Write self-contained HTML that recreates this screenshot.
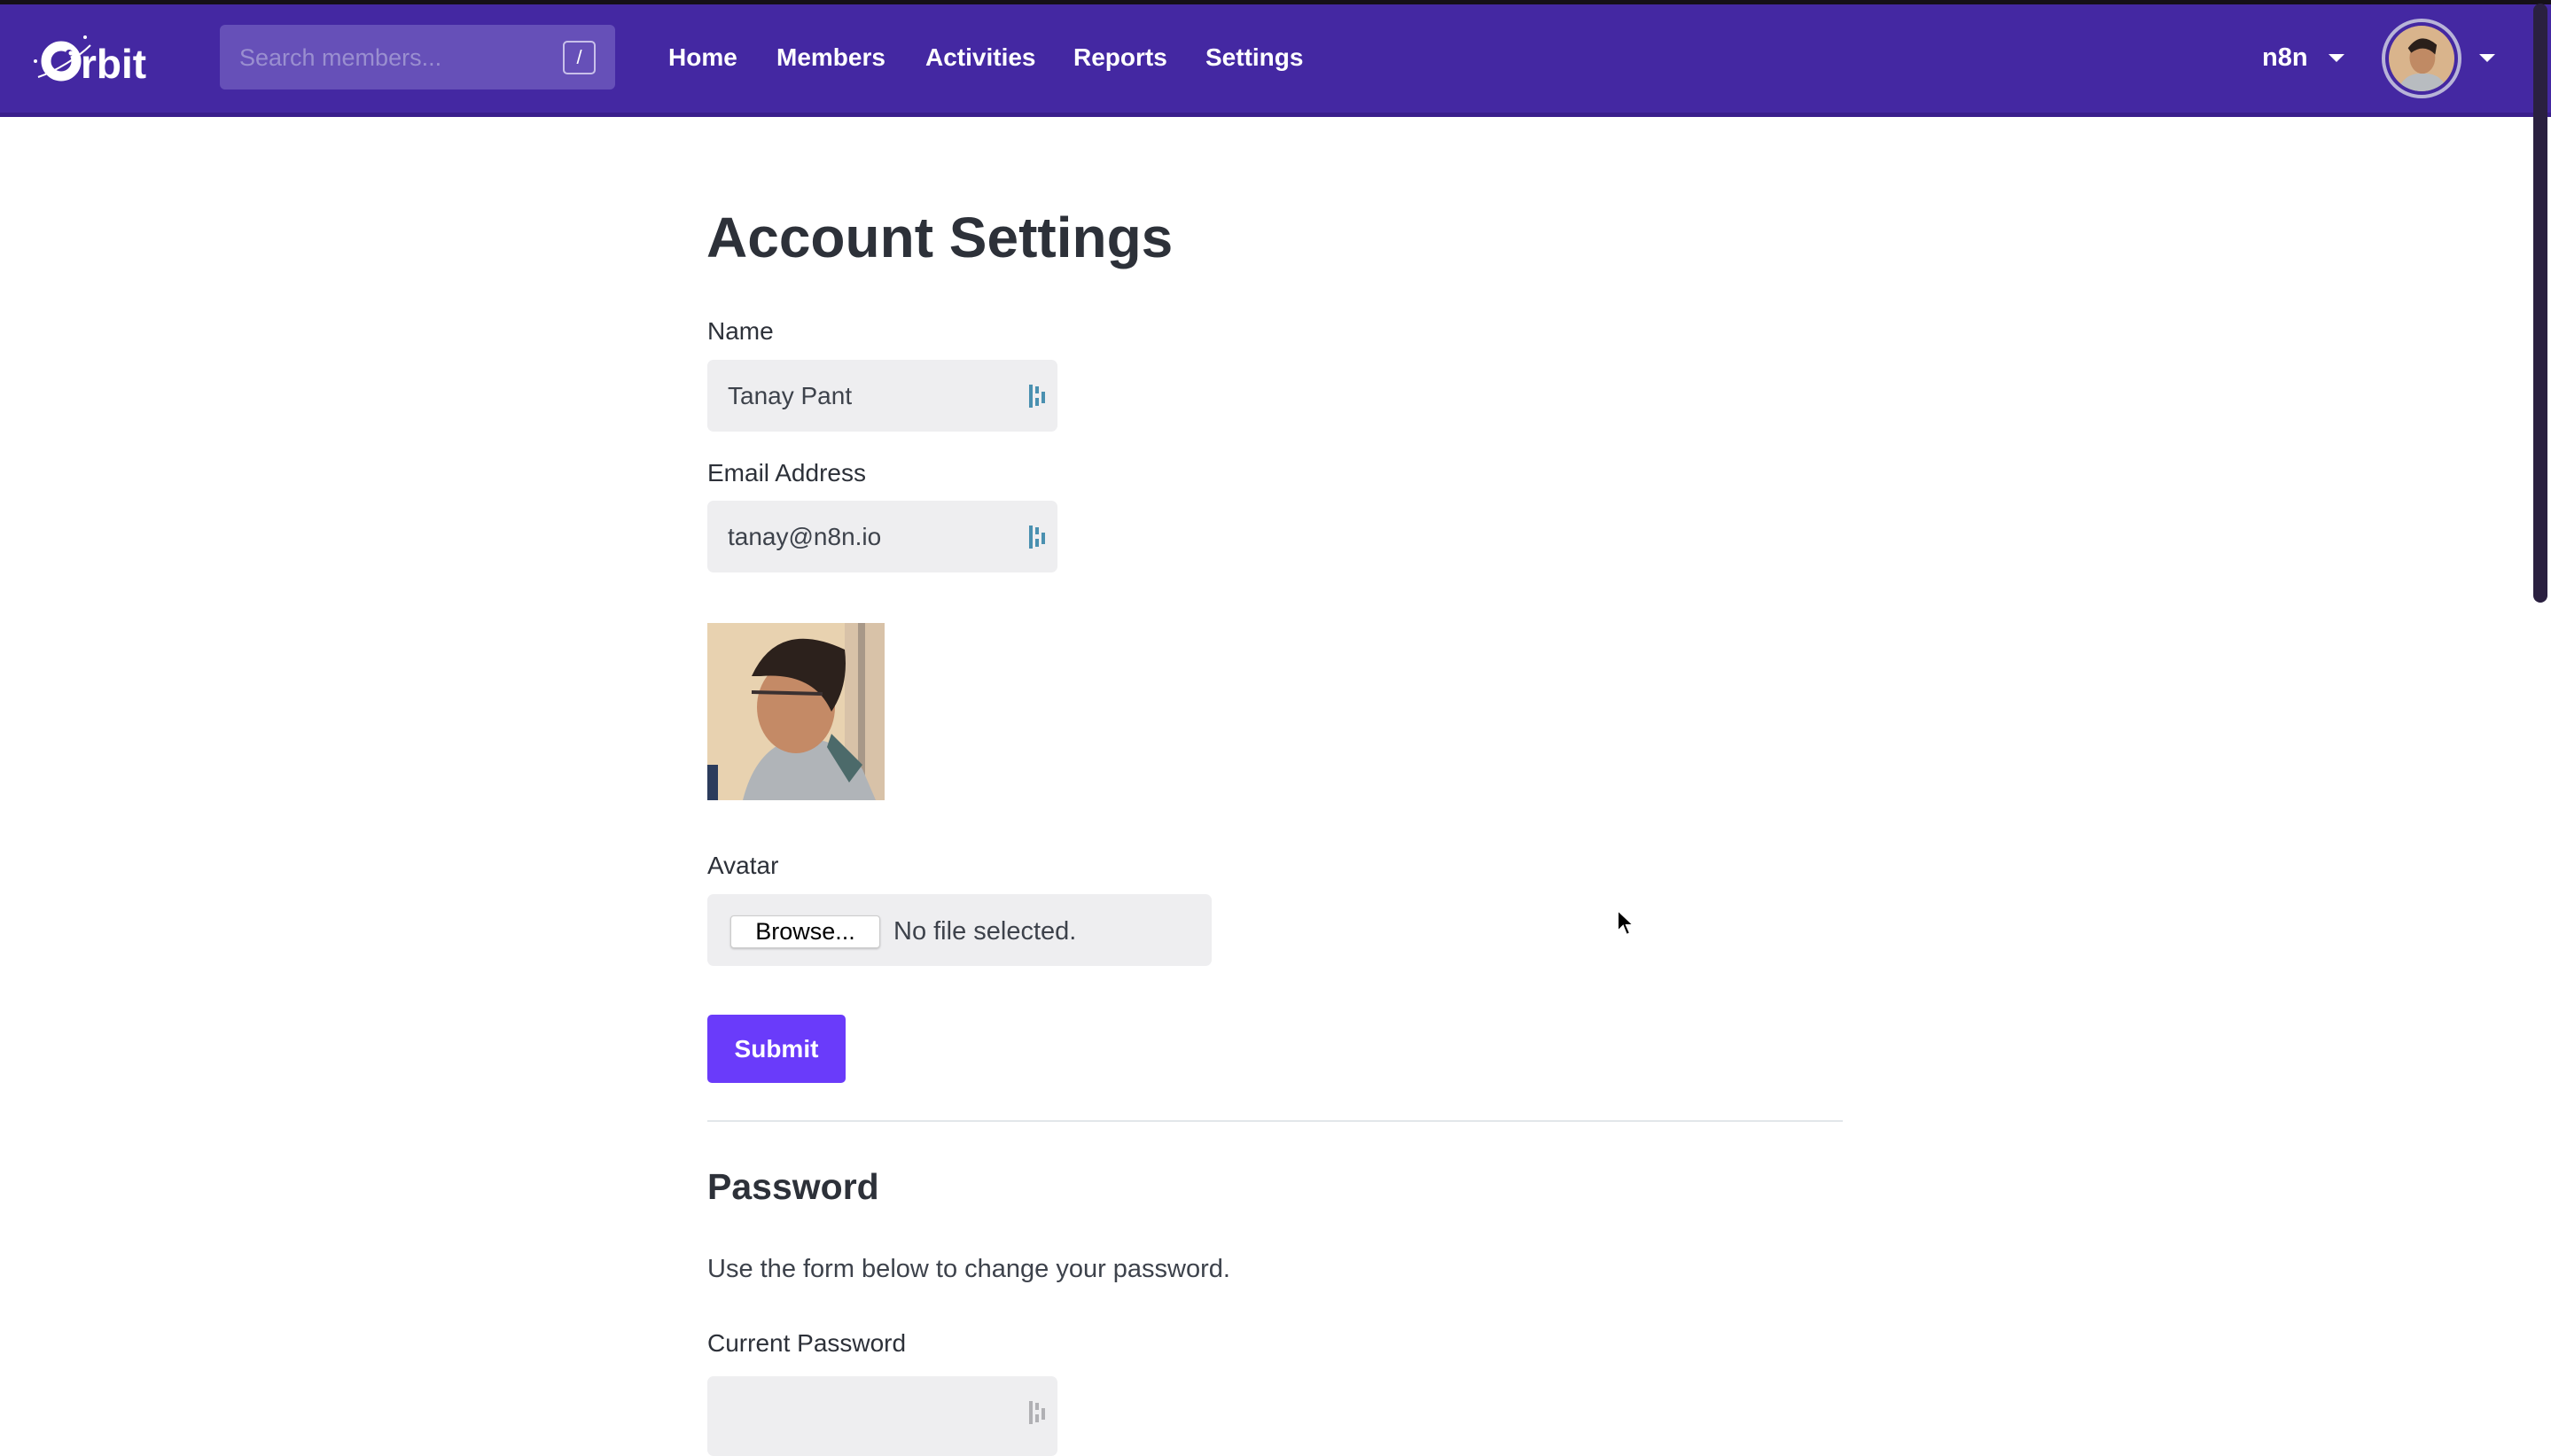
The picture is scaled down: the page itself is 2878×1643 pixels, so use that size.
<!DOCTYPE html>
<html><head><meta charset="utf-8"><style>
*{margin:0;padding:0;box-sizing:border-box}
html,body{width:2878px;height:1634px;overflow:hidden;background:#fff;font-family:"Liberation Sans",sans-serif;color:#2d3139}
.a{position:absolute;white-space:nowrap}
.hdr{position:absolute;left:0;top:0;width:2878px;height:132px;background:#4428a2;border-top:5px solid #151018;border-bottom:5px solid #3a1f8c}
.nav{font-size:28px;font-weight:bold;color:#fff;top:48px;line-height:34px}
.lbl{font-size:28px;color:#2d3139;line-height:32px}
.inp{position:absolute;background:#eeeef0;border-radius:7px}
.inp span{position:absolute;left:23px;top:0;line-height:81px;font-size:28px;color:#3d424b}
.ic{position:absolute;right:12px;top:28px}
</style></head><body>
<div class="hdr"></div>
<svg class="a" style="left:34px;top:36px" width="140" height="62" viewBox="0 0 140 62">
<circle cx="35" cy="33" r="17" fill="none" stroke="#fff" stroke-width="11"/>
<circle cx="44" cy="24" r="4" fill="#4428a2"/>
<circle cx="46" cy="24" r="2.5" fill="#fff"/>
<circle cx="62" cy="6" r="2" fill="#fff"/>
<circle cx="6" cy="33" r="2" fill="#fff"/>
<path d="M9 51 C30 44 55 28 68 15" stroke="#fff" stroke-width="2" fill="none"/>
<text x="57" y="52" font-family="Liberation Sans" font-weight="bold" font-size="46" fill="#fff">rbit</text>
</svg>
<div class="a" style="left:248px;top:28px;width:446px;height:73px;background:#6650b8;border-radius:6px"></div>
<div class="a" style="left:270px;top:46px;font-size:27px;color:#9a8fd0;line-height:38px">Search members...</div>
<div class="a" style="left:635px;top:46px;width:37px;height:38px;border:2px solid #c8c0ea;border-radius:5px;color:#fff;font-size:22px;text-align:center;line-height:34px">/</div>
<div class="a nav" style="left:754px">Home</div>
<div class="a nav" style="left:876px">Members</div>
<div class="a nav" style="left:1044px">Activities</div>
<div class="a nav" style="left:1211px">Reports</div>
<div class="a nav" style="left:1360px">Settings</div>
<div class="a nav" style="left:2552px;font-size:29px">n8n</div>
<div class="a" style="left:2627px;top:61px;border-left:9px solid transparent;border-right:9px solid transparent;border-top:9px solid #fff"></div>
<div class="a" style="left:2687px;top:21px;width:90px;height:90px;border-radius:50%;border:4px solid #b8b4d8;overflow:hidden;background:#4428a2;padding:4px">
<svg width="74" height="74" viewBox="0 0 82 82" style="border-radius:50%;display:block"><rect width="82" height="82" fill="#d9b48c"/><ellipse cx="42" cy="40" rx="16" ry="20" fill="#c08a64"/><path d="M24 28 Q40 6 60 24 L58 36 Q44 22 28 34Z" fill="#2a1f1a"/><path d="M10 82 Q20 58 42 60 Q66 58 74 82Z" fill="#b8bcc0"/></svg></div>
<div class="a" style="left:2797px;top:61px;border-left:9px solid transparent;border-right:9px solid transparent;border-top:9px solid #fff"></div>
<div class="a" style="left:2858px;top:4px;width:16px;height:676px;background:#2a2040;border-radius:8px"></div>

<div class="a" style="left:797px;top:228px;font-size:64px;font-weight:bold;color:#2d3139;line-height:80px">Account Settings</div>
<div class="a lbl" style="left:798px;top:358px">Name</div>
<div class="inp" style="left:798px;top:406px;width:395px;height:81px"><span>Tanay Pant</span>
<svg class="ic" width="20" height="26"><rect x="0" y="0" width="4" height="26" fill="#4a90b0"/><rect x="7" y="2" width="4" height="8" fill="#4a90b0"/><rect x="7" y="15" width="4" height="9" fill="#4a90b0"/><rect x="14" y="8" width="4" height="13" fill="#4a90b0"/></svg></div>
<div class="a lbl" style="left:798px;top:518px">Email Address</div>
<div class="inp" style="left:798px;top:565px;width:395px;height:81px"><span>tanay@n8n.io</span>
<svg class="ic" width="20" height="26"><rect x="0" y="0" width="4" height="26" fill="#4a90b0"/><rect x="7" y="2" width="4" height="8" fill="#4a90b0"/><rect x="7" y="15" width="4" height="9" fill="#4a90b0"/><rect x="14" y="8" width="4" height="13" fill="#4a90b0"/></svg></div>

<svg class="a" style="left:798px;top:703px" width="200" height="200" viewBox="0 0 200 200">
<rect width="200" height="200" fill="#e8d2b0"/><rect x="155" width="45" height="200" fill="#d8c2a8"/><rect x="170" width="8" height="200" fill="#a89888"/>
<rect x="0" y="160" width="12" height="40" fill="#2c3c5c"/>
<path d="M40 200 Q55 140 100 130 Q150 128 175 165 L190 200Z" fill="#b0b4b8"/>
<path d="M140 125 L175 160 L160 180 L135 140Z" fill="#4c6a6a"/>
<ellipse cx="100" cy="95" rx="44" ry="52" fill="#c48a66"/>
<path d="M50 60 Q80 -5 155 30 Q160 70 140 100 Q120 55 60 60Z" fill="#2c211c"/>
<path d="M50 78 L130 80" stroke="#3a3030" stroke-width="4"/>
</svg>

<div class="a lbl" style="left:798px;top:961px">Avatar</div>
<div class="inp" style="left:798px;top:1009px;width:569px;height:81px"></div>
<div class="a" style="left:824px;top:1033px;width:169px;height:37px;background:#fff;border:1px solid #ccc;border-radius:4px;box-shadow:0 1px 2px rgba(0,0,0,.2);font-size:27px;color:#000;text-align:center;line-height:35px">Browse...</div>
<div class="a" style="left:1008px;top:1033px;font-size:29px;color:#3d424b;line-height:37px">No file selected.</div>

<div class="a" style="left:798px;top:1145px;width:156px;height:77px;background:#6a3bfa;border-radius:5px;color:#fff;font-size:28px;font-weight:bold;text-align:center;line-height:77px">Submit</div>
<div class="a" style="left:798px;top:1264px;width:1281px;height:2px;background:#e2e6ea"></div>
<div class="a" style="left:798px;top:1314px;font-size:41px;font-weight:bold;color:#2d3139;line-height:50px">Password</div>
<div class="a" style="left:798px;top:1416px;font-size:29px;color:#3d424b;line-height:32px">Use the form below to change your password.</div>
<div class="a lbl" style="left:798px;top:1500px">Current Password</div>
<div class="inp" style="left:798px;top:1553px;width:395px;height:90px">
<svg class="ic" style="top:28px" width="20" height="26"><rect x="0" y="0" width="4" height="26" fill="#b0b0b4"/><rect x="7" y="2" width="4" height="8" fill="#b0b0b4"/><rect x="7" y="15" width="4" height="9" fill="#b0b0b4"/><rect x="14" y="8" width="4" height="13" fill="#b0b0b4"/></svg></div>

<svg class="a" style="left:1823px;top:1025px" width="24" height="34" viewBox="0 0 24 34"><path d="M2 2 L2 26 L8 20 L12 30 L16 28 L12 19 L20 19Z" fill="#000" stroke="#fff" stroke-width="2"/></svg>
</body></html>
